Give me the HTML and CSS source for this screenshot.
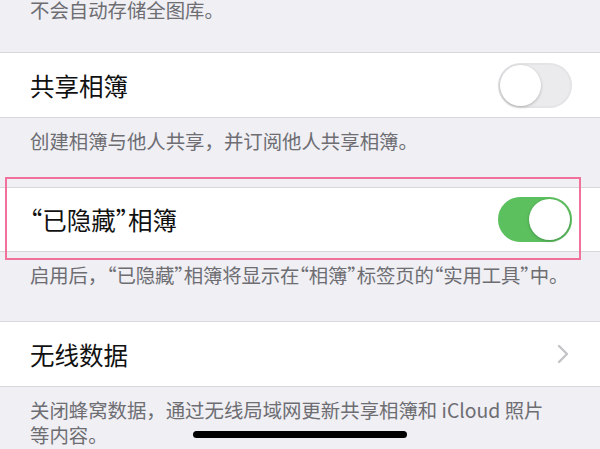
FILE: index.html
```html
<!DOCTYPE html>
<html lang="zh-CN">
<head>
  <meta charset="UTF-8">
  <title>照片设置</title>
  <link rel="stylesheet" href="styles.css">
</head>
<body>

<p class="note note-top">不会自动存储全图库。</p>

<div class="group">
  <div class="row">
    <span class="label">共享相簿</span>
    <span class="switch"><span class="knob"></span></span>
  </div>
</div>
<p class="note">创建相簿与他人共享，并订阅他人共享相簿。</p>

<div class="highlight">
  <div class="group">
    <div class="row row-short">
      <span class="label"><span class="q">“</span>已隐藏<span class="q">”</span>相簿</span>
      <span class="switch on"><span class="knob"></span></span>
    </div>
  </div>
</div>
<p class="note note-tight">启用后，<span class="q">“</span>已隐藏<span class="q">”</span>相簿将显示在<span class="q">“</span>相簿<span class="q">”</span>标签页的<span class="q">“</span>实用工具<span class="q">”</span>中。</p>

<div class="group">
  <div class="row">
    <span class="label">无线数据</span>
    <svg class="chevron" width="12" height="20" viewBox="0 0 12 20">
      <polyline points="2,2 10,10 2,18" fill="none" stroke="#c4c4c8" stroke-width="2.4" stroke-linecap="round" stroke-linejoin="round"/>
    </svg>
  </div>
</div>
<p class="note note-last">关闭蜂窝数据，通过无线局域网更新共享相簿和 iCloud 照片<br>等内容。</p>

<div class="home-bar"></div>

</body>
</html>
```

FILE: styles.css
```css
html, body {
  height: 449px;
  overflow: hidden;
}

body {
  margin: 0;
  background: #efeff4;
  font-family: "Noto Sans CJK SC", sans-serif;
  color: #111;
}

.note {
  margin: 0;
  padding: 10px 30px 34px;
  font-size: 19.4px;
  line-height: 25px;
  color: #6d6d72;
}

.note-top {
  margin-top: -3px;
  padding-top: 0;
  padding-bottom: 30px;
}

.note-tight {
  white-space: nowrap;
  letter-spacing: -0.15px;
  padding-right: 0;
}

.note-last {
  padding-bottom: 0;
}

/* proportional quotes, as iOS sets them */
.q {
  font-feature-settings: "halt";
}

.group {
  background: #fff;
  border-top: 1px solid #d8d8dc;
  border-bottom: 1px solid #d8d8dc;
}

.row {
  height: 64px;
  padding: 0 29px 0 30px;
  display: flex;
  align-items: center;
  justify-content: space-between;
}

.row-short {
  height: 63px;
}

.label {
  font-size: 24.5px;
}

.switch {
  width: 74px;
  height: 45px;
  box-sizing: border-box;
  border-radius: 23px;
  background: #ebebed;
  border: 2px solid #e4e4e6;
  position: relative;
  margin-right: -1px;
}

.switch .knob {
  position: absolute;
  top: 0;
  left: 0;
  width: 41px;
  height: 41px;
  border-radius: 50%;
  background: #fff;
  box-shadow: 0 1px 3px rgba(0, 0, 0, 0.25);
}

.switch.on {
  background: #5cc05f;
  border-color: #5cc05f;
}

.switch.on .knob {
  left: auto;
  right: 0;
}

.chevron {
  margin-right: 2px;
}

.highlight {
  position: relative;
}

.highlight::after {
  content: "";
  position: absolute;
  top: -10px;
  left: 5px;
  right: 19px;
  bottom: -8px;
  border: 2px solid #f0719a;
  pointer-events: none;
}

.home-bar {
  position: fixed;
  left: 193px;
  bottom: 11px;
  width: 214px;
  height: 7px;
  border-radius: 4px;
  background: #000;
}
```
